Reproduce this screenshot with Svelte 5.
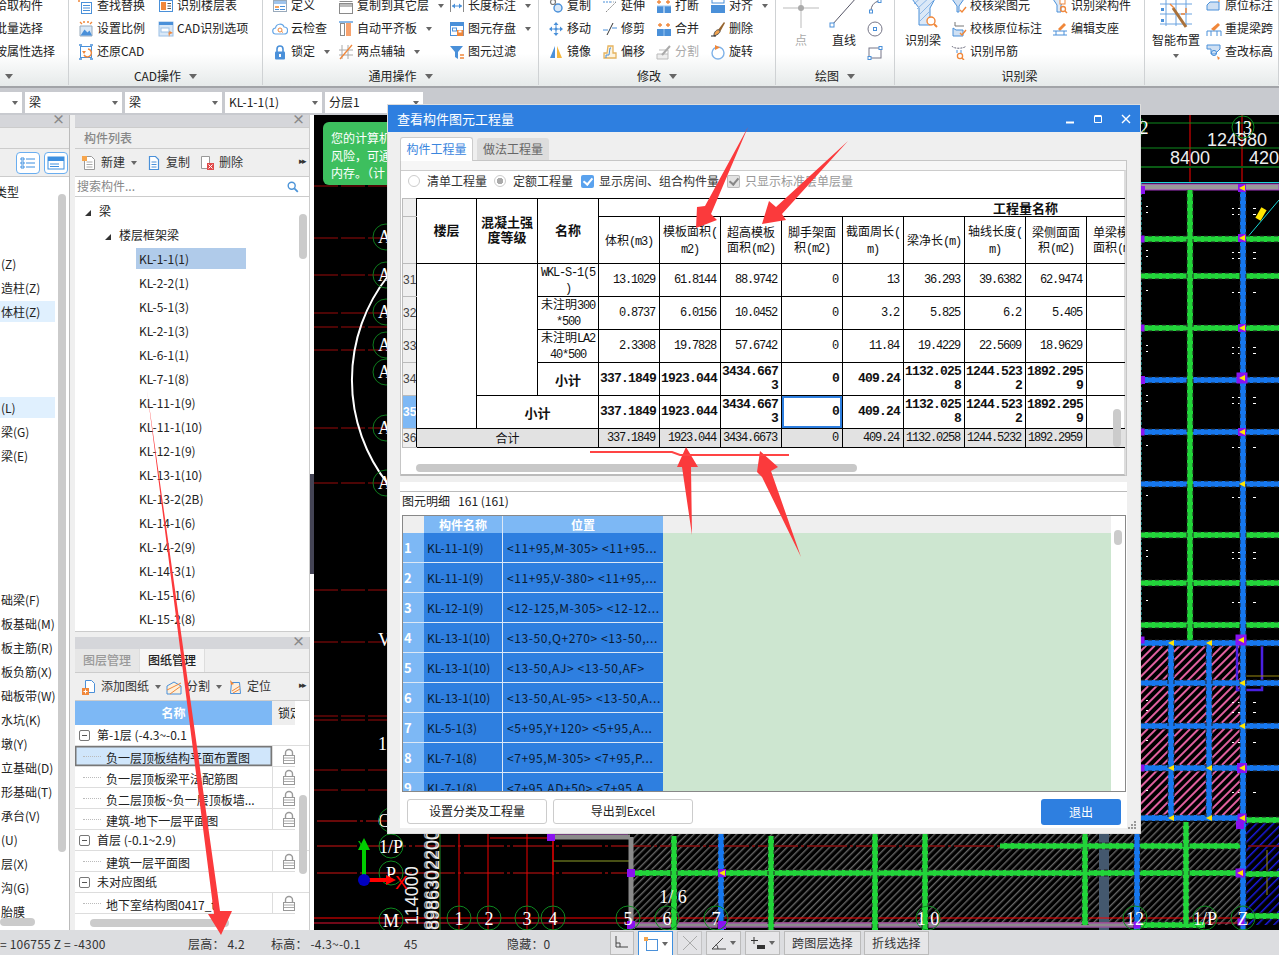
<script>
const B = '#4a90d9', O = '#f0873a', L = '#d9e8f7', G = '#8a8a8a', D = '#555';
const icons = {
  find: `<rect x="3.5" y="4.5" width="10" height="11" fill="#fff" stroke="${B}"/><path d="M5 7.5h7M5 10h7M5 12.5h7" stroke="${B}"/><path d="M1 1v3M12 1h3" stroke="${O}" stroke-width="1.5"/>`,
  floor: `<rect x="1.5" y="2.5" width="13" height="11" fill="#fff" stroke="${B}"/><rect x="3" y="4" width="5" height="8" fill="${O}"/><path d="M9.5 5.5h3.5M9.5 8h3.5M9.5 10.5h3.5" stroke="${D}"/>`,
  scale: `<path d="M2 15V5h12v10z" fill="${L}" stroke="#9ab"/><path d="M2.5 14.5l4-6 3 3 2-2 2.5 5z" fill="${B}"/><path d="M2 1l2 2M14 1l-2 2M5 1h2M9 1h2" stroke="${O}" stroke-width="1.3"/>`,
  cad: `<rect x="1" y="1" width="14" height="14" fill="${L}" stroke="#9cc0e6"/><rect x="1" y="1" width="14" height="3" fill="${B}"/><path d="M10 9l5 3-3 1-1 3z" fill="${O}"/><rect x="3" y="7" width="8" height="4" fill="#fff" stroke="#9cc0e6"/>`,
  restore: `<rect x="2.5" y="2.5" width="11" height="11" fill="none" stroke="${B}"/><path d="M1 1h3M12 1h3M1 15h3M12 15h3" stroke="${B}" stroke-width="1.3"/><path d="M10 5a4 4 0 1 1-4 6" fill="none" stroke="${O}" stroke-width="1.5"/><path d="M4 7h4l-2 3z" fill="${O}"/>`,
  define: `<rect x="1.5" y="2.5" width="13" height="11" fill="#fff" stroke="#9ab"/><rect x="2" y="3" width="12" height="3" fill="#9fc4ec"/><rect x="3" y="8" width="4" height="2" fill="#f4a460"/><path d="M8 8.5h5M8 11.5h5M3 11.5h4" stroke="${B}"/>`,
  cloud: `<path d="M4 13a3 3 0 0 1-.5-6 4.5 4.5 0 0 1 8.6-1A3.5 3.5 0 0 1 12 13z" fill="#fff" stroke="#66a6e6" stroke-width="1.2"/><circle cx="8" cy="9" r="2" fill="none" stroke="${O}"/><path d="M9.5 10.5l1.5 1" stroke="${O}"/>`,
  lock: `<path d="M5 8V5a3 3 0 0 1 6 0v3" fill="none" stroke="${B}" stroke-width="1.6"/><rect x="3" y="7.5" width="10" height="8" rx="1" fill="${B}"/><rect x="7" y="10" width="2" height="3" fill="#fff"/>`,
  layers: `<rect x="1.5" y="5.5" width="13" height="10" fill="#fff" stroke="${G}"/><rect x="2" y="6" width="12" height="3" fill="#bbb"/><path d="M3 1.5h10M1.5 3.5h13" stroke="${G}"/>`,
  slab: `<rect x="2.5" y="2.5" width="4" height="12" fill="#fff" stroke="${G}"/><rect x="8" y="2" width="5" height="13" fill="#f7a26e"/><path d="M1 1h14" stroke="${B}" stroke-width="1.3"/>`,
  aux: `<path d="M4 1v14M10 1v14M1 6h14M1 11h14" stroke="#aaa"/><path d="M2 15L14 1" stroke="${O}" stroke-width="1.3"/>`,
  dim: `<path d="M1.5 2v12M14.5 2v12" stroke="${G}"/><path d="M3 8h10" stroke="${B}"/><path d="M3 8l3-2.5v5zM13 8l-3-2.5v5z" fill="${B}"/>`,
  save: `<rect x="1.5" y="1.5" width="13" height="13" fill="#fff" stroke="${B}"/><rect x="2" y="2" width="12" height="3" fill="${B}"/><rect x="3.5" y="7" width="4" height="3" fill="none" stroke="${B}"/><rect x="8" y="9" width="6.5" height="6" fill="${O}"/><rect x="9.5" y="9.5" width="3" height="2" fill="#fff"/>`,
  filter: `<path d="M1 2h13L9 8v7l-3-2V8z" fill="${B}"/><path d="M11 11h4M11 14h4" stroke="${O}" stroke-width="1.3"/>`,
  copy: `<circle cx="5" cy="4" r="2.5" fill="#fff" stroke="#777" stroke-width="1.2"/><circle cx="10" cy="10" r="4" fill="${L}" stroke="${B}" stroke-width="1.4"/><path d="M7 6l1 1" stroke="#777"/>`,
  move: `<path d="M8 1l2.5 3h-5zM8 15l-2.5-3h5zM1 8l3-2.5v5zM15 8l-3 2.5v-5z" fill="${B}"/><path d="M8 4v8M4 8h8" stroke="${B}"/><circle cx="8" cy="8" r="1.5" fill="${B}"/>`,
  mirror: `<path d="M2 14L7 2v12z" fill="${B}"/><path d="M9 2l5 12H9z" fill="#f6b73c"/>`,
  extend: `<path d="M1 4h8" stroke="${B}" stroke-dasharray="2 1"/><path d="M9 4h6" stroke="#9ab" stroke-dasharray="1 1"/><path d="M4 14l10-10" stroke="${G}" stroke-dasharray="2 1"/>`,
  trim: `<path d="M1 9h5M10 7h5" stroke="${B}" stroke-width="1.2"/><path d="M5 14l6-12" stroke="#333"/>`,
  offset: `<path d="M2 14V9h3l1-7h5v7h3v5z" fill="#fdf3de" stroke="#e5b35e" stroke-width="1.3"/><path d="M4 14v-3h3l1-7h1" fill="none" stroke="${B}"/>`,
  brk: `<rect x="1" y="8" width="6.5" height="7" fill="${B}"/><rect x="8.5" y="8" width="6.5" height="7" fill="${B}"/><path d="M1 8h14" stroke="#9cc6f0"/><path d="M3 2v4M5 4H1M12 2v4M14 4h-4" stroke="${O}" stroke-width="1.3"/>`,
  merge: `<rect x="1" y="8" width="14" height="7" fill="${B}"/><path d="M8 8v7" stroke="#9cc6f0"/><path d="M4 2v4M6 4H2M12 2v4M14 4h-4" stroke="${O}" stroke-width="1.3"/>`,
  split: `<path d="M1 10h11v5H1z" fill="#eee" stroke="#bbb"/><path d="M3 6h9v4" fill="none" stroke="#bbb"/><path d="M6 11l8-9" stroke="#aaa" stroke-width="2"/>`,
  alignr: `<rect x="2" y="1" width="12" height="4" fill="#fff" stroke="${B}"/><rect x="1" y="7" width="14" height="8" fill="${B}"/>`,
  del: `<path d="M8 9l6-8 1 1-5 9z" fill="#96642e"/><path d="M4 14c0-3 3-6 5-5s1 4-5 6z" fill="#f0a24e" stroke="#555"/><path d="M1 15h5" stroke="#222"/>`,
  rotate: `<circle cx="8" cy="9" r="6" fill="#fff" stroke="#7fb2e8" stroke-width="1.4"/><path d="M5 1l5 2.5-5 2.5z" fill="${O}"/>`,
  check1: `<path d="M1 1h12L8 8v6H6V8z" fill="#cfe0f3" stroke="${B}"/><path d="M9 12l2 2 4-5" fill="none" stroke="${O}" stroke-width="1.4"/>`,
  check2: `<path d="M2 7v8h10V9H5z" fill="#cfe0f3" stroke="${B}"/><path d="M4 1v4h9" fill="none" stroke="#777"/><path d="M9 12l2 2 4-5" fill="none" stroke="${O}" stroke-width="1.4"/>`,
  hanger: `<path d="M1 2c1 3 12 3 14 0" fill="none" stroke="#667" stroke-dasharray="2 1"/><path d="M6 6v3M10 6v3" stroke="${B}"/><circle cx="9" cy="12" r="2.6" fill="none" stroke="${O}" stroke-width="1.3"/><path d="M11 14l2 2" stroke="${O}" stroke-width="1.5"/>`,
  beam: `<path d="M1 1h12L9 7v7H5V7z" fill="#dde9f6" stroke="${B}"/><rect x="8" y="1" width="5" height="5" fill="#fff" stroke="${O}"/><circle cx="11" cy="11" r="2.5" fill="none" stroke="${O}" stroke-width="1.3"/><path d="M13 13l2 2" stroke="${O}" stroke-width="1.5"/>`,
  seat: `<path d="M6 8l6-6 2 2-6 6z" fill="${O}"/><path d="M1 10h14M1 14h14" stroke="${B}"/><path d="M4 10v4M12 10v4" stroke="${B}"/>`,
  orig: `<path d="M1 7l3-3h9v8H1z" fill="#cfe0f3" stroke="${B}"/><path d="M5 1h8v3" fill="none" stroke="${O}"/>`,
  span: `<path d="M5 8l7-6 2 2-6 6z" fill="${O}"/><path d="M1 10h14v5M1 10v5M5 10v5M11 10v5" fill="none" stroke="${B}"/>`,
  elev: `<path d="M1 1h13v4L10 9v1H5V5L1 5z" fill="#cfe0f3" stroke="${B}"/><circle cx="8" cy="9" r="2.6" fill="none" stroke="${B}"/><path d="M11 12l3 2-2 2z" fill="${O}"/>`,
  arcI: `<path d="M4 13c0-5 3-9 8-10" fill="none" stroke="#667"/><rect x="2.5" y="12" width="3" height="3" fill="#fff" stroke="${B}"/><rect x="11" y="1.5" width="3" height="3" fill="#fff" stroke="${B}"/>`,
  circI: `<circle cx="8" cy="8" r="7" fill="none" stroke="#778"/><rect x="6.5" y="6.5" width="3" height="3" fill="#fff" stroke="${B}"/>`,
  rectI: `<rect x="2" y="4" width="12" height="10" fill="none" stroke="#778"/><rect x="12" y="2.5" width="3" height="3" fill="#fff" stroke="${B}"/><rect x="1" y="12.5" width="3" height="3" fill="#fff" stroke="${B}"/>`,
  newd: `<path d="M3.5 1.5h7l3 3v10h-10z" fill="#fff" stroke="#999"/><path d="M5.5 7h6M5.5 9.5h6M5.5 12h6" stroke="#aaa"/><rect x="1" y="1" width="5" height="5" fill="#f6a54c"/>`,
  cpd: `<path d="M3.5 1.5h6l3 3v10h-9z" fill="#fff" stroke="${B}" stroke-width="1.2"/><path d="M5.5 7h5M5.5 9.5h5M5.5 12h5" stroke="${B}"/>`,
  dld: `<path d="M2.5 1.5h8v12h-8z" fill="#fff" stroke="#999"/><rect x="8" y="8" width="7" height="7" fill="#e04a4a"/><path d="M9.5 9.5l4 4M13.5 9.5l-4 4" stroke="#fff"/>`,
  add: `<path d="M4.5 1.5h6l3 3v9h-9z" fill="#fff" stroke="${B}"/><rect x="1" y="9" width="7" height="7" fill="${O}"/><path d="M4.5 10.5v4M2.5 12.5h4" stroke="#fff"/>`,
  spl: `<path d="M1 15V7l7-4 7 4v8z" fill="#fdf0dc" stroke="${B}"/><path d="M1 11l14-7M4 15l11-8" stroke="${O}"/>`,
  loc: `<path d="M4.5 3.5h8l1 11h-10z" fill="#fdeedd" stroke="${B}"/><path d="M5 12l8-5M6 14l7-4" stroke="${O}"/><path d="M3 1l4 4-3 1z" fill="${O}"/>`,
  search: `<circle cx="6.5" cy="6.5" r="4" fill="none" stroke="#4c94d8" stroke-width="1.6"/><path d="M9.5 9.5l4 4" stroke="#4c94d8" stroke-width="2"/>`,
  padlock: `<path d="M4.5 8V5a3.5 3.5 0 0 1 7 0v3" fill="none" stroke="#999" stroke-width="1.4"/><rect x="2.5" y="7.5" width="11" height="8" fill="#fff" stroke="#999"/><path d="M3 10h10M3 12.5h10" stroke="#aaa"/>`,
  ortho: `<path d="M2 1v11h12" fill="none" stroke="#444"/><path d="M2 8h4v4" fill="none" stroke="#444"/>`,
  snap: `<rect x="3.5" y="3.5" width="11" height="11" fill="#fff" stroke="${B}"/><rect x="1" y="1" width="4" height="4" fill="#f6a54c"/>`,
  cross: `<path d="M1 1l14 14M15 1L1 15" stroke="#999"/>`,
  angle: `<path d="M1 14h14M1 14L12 3" stroke="#444"/><path d="M7 14a8 8 0 0 0-2-5" fill="none" stroke="#444"/>`,
  plus: `<path d="M4 2v7M1 5.5h7" stroke="#333"/><rect x="7" y="10" width="8" height="4" fill="#333"/>`
};

const groups = [
  { w: 69, cls: 'first', label: '', pad: -5, caret: 1, cols: [{ w: 74, items: [{ t: '拾取构件' }, { t: '批量选择' }, { t: '按属性选择' }] }] },
  { w: 194, label: 'CAD操作', caret: 1, pad: 9, cols: [
    { w: 80, items: [{ i: 'find', t: '查找替换' }, { i: 'scale', t: '设置比例' }, { i: 'restore', t: '还原CAD' }] },
    { w: 100, items: [{ i: 'floor', t: '识别楼层表' }, { i: 'cad', t: 'CAD识别选项' }] }] },
  { w: 276, label: '通用操作', caret: 1, pad: 9, cols: [
    { w: 66, items: [{ i: 'define', t: '定义' }, { i: 'cloud', t: '云检查' }, { i: 'lock', t: '锁定', c: 1 }] },
    { w: 111, items: [{ i: 'layers', t: '复制到其它层', c: 1 }, { i: 'slab', t: '自动平齐板', c: 1 }, { i: 'aux', t: '两点辅轴', c: 1 }] },
    { w: 90, items: [{ i: 'dim', t: '长度标注', c: 1 }, { i: 'save', t: '图元存盘', c: 1 }, { i: 'filter', t: '图元过滤' }] }] },
  { w: 237, label: '修改', caret: 1, pad: 9, cols: [
    { w: 54, items: [{ i: 'copy', t: '复制' }, { i: 'move', t: '移动' }, { i: 'mirror', t: '镜像' }] },
    { w: 54, items: [{ i: 'extend', t: '延伸' }, { i: 'trim', t: '修剪' }, { i: 'offset', t: '偏移' }] },
    { w: 54, items: [{ i: 'brk', t: '打断' }, { i: 'merge', t: '合并' }, { i: 'split', t: '分割', off: 1 }] },
    { w: 60, items: [{ i: 'alignr', t: '对齐', c: 1 }, { i: 'del', t: '删除' }, { i: 'rotate', t: '旋转' }] }] },
  { w: 119, label: '绘图', caret: 1, pad: 0, bigs: [{ k: 'point', t: '点', w: 50, off: 1 }, { k: 'line', t: '直线', w: 36 }], gap: 5, cols: [{ w: 24, items: [{ i: 'arcI' }, { i: 'circI' }, { i: 'rectI' }] }] },
  { w: 250, label: '识别梁', pad: 8, bigs: [{ k: 'funnel', t: '识别梁', w: 40 }], gap: 8, cols: [
    { w: 101, items: [{ i: 'check1', t: '校核梁图元' }, { i: 'check2', t: '校核原位标注' }, { i: 'hanger', t: '识别吊筋' }] },
    { w: 90, items: [{ i: 'beam', t: '识别梁构件' }, { i: 'seat', t: '编辑支座' }] }] },
  { w: 134, label: '', pad: 5, bigs: [{ k: 'smart', t: '智能布置', w: 52, c: 1 }], gap: 4, cols: [
    { w: 70, items: [{ i: 'orig', t: '原位标注' }, { i: 'span', t: '重提梁跨' }, { i: 'elev', t: '查改标高' }] }] }
];

const selects = [{ w: 22, t: '' }, { w: 97, t: '梁' }, { w: 97, t: '梁' }, { w: 97, t: 'KL-1-1(1)' }, { w: 98, t: '分层1' }];

const leftList = [
  ['类型', -5], 0, 0, ['(Z)', 1], ['造柱(Z)', 1], ['体柱(Z)', 1, 1], 0, 0, 0, ['(L)', 1, 1], ['梁(G)', 1], ['梁(E)', 1],
  0, 0, 0, 0, 0, ['础梁(F)', 1], ['板基础(M)', 1], ['板主筋(R)', 1], ['板负筋(X)', 1], ['础板带(W)', 1], ['水坑(K)', 1],
  ['墩(Y)', 1], ['立基础(D)', 1], ['形基础(T)', 1], ['承台(V)', 1], ['(U)', 1], ['层(X)', 1], ['沟(G)', 1], ['胎膜', 1]
];
const beams = ['KL-1-1(1)', 'KL-2-2(1)', 'KL-5-1(3)', 'KL-2-1(3)', 'KL-6-1(1)', 'KL-7-1(8)', 'KL-11-1(9)', 'KL-11-1(10)', 'KL-12-1(9)', 'KL-13-1(10)', 'KL-13-2(2B)', 'KL-14-1(6)', 'KL-14-2(9)', 'KL-14-3(1)', 'KL-15-1(6)', 'KL-15-2(8)'];
const drawings = [
  { g: '第-1层 (-4.3~-0.1' },
  { t: '负一层顶板结构平面布置图', cur: 1 },
  { t: '负一层顶板梁平法配筋图' },
  { t: '负二层顶板~负一层顶板墙...' },
  { t: '建筑-地下一层平面图' },
  { g: '首层 (-0.1~2.9)' },
  { t: '建筑一层平面图' },
  { g: '未对应图纸' },
  { t: '地下室结构图0417_t' }
];

const metricHead = ['体积(m3)', '模板面积(\nm2)', '超高模板\n面积(m2)', '脚手架面\n积(m2)', '截面周长(\nm)', '梁净长(m)', '轴线长度(\nm)', '梁侧面面\n积(m2)', '单梁模板\n面积(m2)'];
const rowsA = [
  { n: 31, name: 'WKL-S-1(5\n)', v: ['13.1029', '61.8144', '88.9742', '0', '13', '36.293', '39.6382', '62.9474', ''] },
  { n: 32, name: '未注明300\n*500', v: ['0.8737', '6.0156', '10.0452', '0', '3.2', '5.825', '6.2', '5.405', ''] },
  { n: 33, name: '未注明LA2\n40*500', v: ['2.3308', '19.7828', '57.6742', '0', '11.84', '19.4229', '22.5609', '18.9629', ''] }
];
const subtotal = ['337.1849', '1923.044', '3434.667\n3', '0', '409.24', '1132.025\n8', '1244.523\n2', '1892.295\n9', ''];
const total = ['337.1849', '1923.044', '3434.6673', '0', '409.24', '1132.0258', '1244.5232', '1892.2959', ''];
const colW = [14, 60, 61, 61, 61, 61, 61, 61, 61, 61, 61, 61, 61];

function lines(s) { return s.split('\n').map((l) => l.split(/([\x00-\x7f]+)/).filter(Boolean)); }
const isAscii = (s) => /^[\x00-\x7f]+$/.test(s);

const detail = [
  ['KL-11-1(9)', '<11+95,M-305> <11+95...'], ['KL-11-1(9)', '<11+95,V-380> <11+95,...'], ['KL-12-1(9)', '<12-125,M-305> <12-12...'],
  ['KL-13-1(10)', '<13-50,Q+270> <13-50,...'], ['KL-13-1(10)', '<13-50,AJ> <13-50,AF>'], ['KL-13-1(10)', '<13-50,AL-95> <13-50,A...'],
  ['KL-5-1(3)', '<5+95,Y+120> <5+95,A...'], ['KL-7-1(8)', '<7+95,M-305> <7+95,P...'], ['KL-7-1(8)', '<7+95,AD+50> <7+95,A...']
];

const statusText = [['= 106755 Z = -4300', 188], ['层高： 4.2', 83], ['标高： -4.3~-0.1', 133], ['45', 103], ['隐藏：0', 103]];
const statusBtns = [{ i: 'ortho', w: 24 }, { i: 'snap', w: 35, c: 1, on: 1 }, { i: 'cross', w: 25, off: 1 }, { i: 'angle', w: 35, c: 1 }, { i: 'plus', w: 35, c: 1 }];

/* drawing data, in page coordinates */
const G1 = '#22d43a', BL = '#1677ee', PU = '#8a12f0', Y = '#ffe600';
const hBeams = [
  [239, 1141, 1279, G1], [276, 1141, 1279, G1], [328, 1141, 1279, G1], [380, 1141, 1279, BL], [432, 1141, 1279, BL], [484, 1141, 1279, BL],
  [535, 1141, 1279, G1], [583, 1141, 1279, G1], [625, 1141, 1279, G1], [643, 1141, 1279, BL], [683, 1141, 1279, BL], [726, 1141, 1279, BL], [768, 1141, 1279, BL],
  [818, 1141, 1241, BL], [820, 1241, 1279, G1], [873, 635, 1240, G1], [846, 1000, 1240, G1], [874, 1245, 1279, G1], [916, 1245, 1279, G1], [925, 1140, 1205, G1]
];
const vBeams = [
  [1190, 190, 640, G1], [1243, 190, 930, BL], [1171, 645, 818, BL], [1209, 645, 818, BL], [1186, 822, 925, G1],
  [674, 836, 930, G1], [771, 836, 930, G1], [875, 833, 930, G1], [925, 833, 930, G1], [1085, 833, 925, G1], [721, 833, 930, BL], [1137, 833, 930, BL]
];
const purple = [[1242, 188, 8], [1242, 238, 8], [1242, 328, 8], [1242, 378, 11], [1242, 432, 8], [1241, 640, 11], [1242, 768, 10], [1242, 818, 9], [1141, 190, 8], [1141, 239, 7], [1141, 328, 7], [1141, 380, 8], [1141, 432, 7], [1141, 640, 7], [1141, 768, 7], [631, 873, 8], [631, 925, 8], [722, 873, 8], [722, 925, 8], [551, 837, 8], [1137, 925, 7], [1241, 922, 7], [1240, 873, 9], [1240, 825, 8]];
const yellow = [[1242, 188], [1242, 238], [1242, 328], [1242, 378], [1242, 432], [1241, 640], [1242, 484], [1171, 643], [1209, 643], [1242, 683], [1242, 726], [1171, 768], [1209, 768], [1242, 768], [1171, 818], [1209, 818], [1242, 818], [722, 873], [1240, 873]];
const ticks = [186, 238, 275, 313, 327, 350, 428, 483, 590, 642, 716, 720, 770, 790];
const darkRed = [821, 846, 873];
const noise = [];
for (const y of [206, 212, 250, 256, 290, 345, 351, 395, 401, 445, 495, 550, 556, 600, 700, 710, 740, 790]) {
  for (const x of [1146, 1232, 1238, 1253]) noise.push([x, y + (x % 3), 2 + (x % 2)]);
}
const circles = [[391, 846, '1/P'], [391, 873, 'P'], [391, 920, 'M'], [459, 918, '1'], [489, 918, '2'], [527, 918, '3'], [553, 918, '4'], [628, 918, '5'], [667, 918, '6'], [716, 918, '7'], [928, 918, '1 0'], [1135, 918, '12'], [1205, 918, '1/P'], [1243, 918, 'Z']];
const axisLabels = [[378, 243], [378, 281], [378, 318], [378, 351], [378, 378], [378, 434], [378, 489]];
</script>

{#snippet icon(name, size = 16)}
  <svg class="i" width={size} height={size} viewBox="0 0 16 16">{@html icons[name]}</svg>
{/snippet}

{#snippet mixed(text)}
  {#each lines(text) as line, li}
    {#if li > 0}<br />{/if}
    {#each line as seg}
      {#if isAscii(seg)}<span class="asc">{seg}</span>{:else}{seg}{/if}
    {/each}
  {/each}
{/snippet}

{#snippet bigIcon(kind)}
  <svg class="bigi" width="36" height="36" viewBox="0 0 36 36">
    {#if kind === 'point'}
      <path d="M18 0v34M0 14h36" stroke="#bbb" /><circle cx="18" cy="14" r="3" fill="#aaa" />
    {:else if kind === 'line'}
      <path d="M6 31L31 3" stroke="#556" /><rect x="4" y="29" width="4" height="4" fill="#fff" stroke="#4a90d9" /><rect x="29" y="1" width="4" height="4" fill="#fff" stroke="#4a90d9" />
    {:else if kind === 'funnel'}
      <path d="M4 1h28l-7 13v17H14V14z" fill="#dbe8f7" stroke="#4a90d9" />
      <path d="M7 5l5-4M9 10l10-9M12 15l15-14M15 20l13-13M15 27l10-10" stroke="#8cb6e6" />
      <circle cx="26" cy="27" r="4" fill="#fff" stroke="#f0873a" stroke-width="1.4" /><path d="M29 30l3 3" stroke="#f0873a" stroke-width="2" />
    {:else}
      <path d="M8 2v30M18 2v30M28 2v30M2 10h32M2 20h32M2 30h32" stroke="#6aa3e0" />
      <path d="M15 14l13 19" stroke="#a9713a" stroke-width="3" />
      <path d="M12 10l4 4M23 20l4 0M28 14v5" stroke="#f0873a" stroke-width="1.4" />
      <rect x="3" y="14" width="3" height="3" fill="#4a90d9" /><rect x="3" y="25" width="3" height="3" fill="#4a90d9" />
    {/if}
  </svg>
{/snippet}

<div class="page">
  <header class="ribbon">
    {#each groups as g}
      <section class="group {g.cls ?? ''}" style:width="{g.w}px">
        <div class="gbody" style:margin-left="{g.pad}px">
          {#if g.bigs}
            {#each g.bigs as b}
              <div class="big" class:off={b.off} style:width="{b.w}px">
                {@render bigIcon(b.k)}
                <span>{b.t}</span>
                {#if b.c}<b class="caret bc"></b>{/if}
              </div>
            {/each}
            <div style:width="{g.gap}px"></div>
          {/if}
          {#each g.cols as col}
            <div class="col" style:width="{col.w}px">
              {#each col.items as it}
                <div class="item" class:off={it.off}>
                  {#if it.i}{@render icon(it.i)}{/if}
                  {#if it.t}<span>{it.t}</span>{/if}
                  {#if it.c}<b class="caret"></b>{/if}
                </div>
              {/each}
            </div>
          {/each}
        </div>
        <div class="glabel">
          <span>{g.label}</span>
          {#if g.caret}<b class="caret dark"></b>{/if}
        </div>
      </section>
    {/each}
  </header>

  <div class="bar">
    {#each selects as s}
      <div class="sel" style:width="{s.w}px"><span>{s.t}</span><b class="caret"></b></div>
    {/each}
  </div>

  <div class="main">
    <aside class="pleft">
      <div class="strip"><span class="x">×</span></div>
      <div class="grayrow"></div>
      <div class="toolrow right">
        <span class="tbtn"><svg width="16" height="14" viewBox="0 0 16 14"><path d="M1 2h3v2H1zM1 6h3v2H1zM1 10h3v2H1z" fill="none" stroke="#3d8fe0" /><path d="M6 3h9M6 7h9M6 11h9" stroke="#3d8fe0" /></svg></span>
        <span class="tbtn"><svg width="18" height="14" viewBox="0 0 18 14"><rect x="1" y="1" width="16" height="12" fill="#fff" stroke="#3d8fe0" /><rect x="1" y="1" width="16" height="4" fill="#3d8fe0" /><path d="M3 8h9M3 10.5h9" stroke="#3d8fe0" /></svg></span>
      </div>
      <div class="llist">
        {#each leftList as l}
          <div class="lrow" class:hl={l && l[2]}>
            {#if l}<span style:margin-left="{l[1]}px">{l[0]}</span>{/if}
          </div>
        {/each}
        <div class="vthumb ltb"></div>
        <div class="hthumb lth"></div>
      </div>
    </aside>

    <aside class="pmid">
      <section class="pup">
        <div class="strip"><span class="x">×</span></div>
        <div class="grayrow title">构件列表</div>
        <div class="toolrow">
          <span class="tool">{@render icon('newd')}新建<b class="caret"></b></span>
          <span class="tool">{@render icon('cpd')}复制</span>
          <span class="tool">{@render icon('dld')}删除</span>
          <span class="more">▸▸</span>
        </div>
        <div class="search"><span>搜索构件...</span>{@render icon('search', 14)}</div>
        <div class="tree">
          <div class="node n0"><i class="tri"></i>梁</div>
          <div class="node n1"><i class="tri"></i>楼层框架梁</div>
          {#each beams as b, i}
            <div class="node n2"><span class:on={i === 0}>{b}</span></div>
          {/each}
          <div class="vthumb ttb"></div>
        </div>
      </section>

      <section class="plow">
        <div class="strip"><span class="x">×</span></div>
        <div class="ltabs"><span>图层管理</span><span class="on">图纸管理</span></div>
        <div class="toolrow low">
          <span class="tool">{@render icon('add')}添加图纸<b class="caret"></b></span>
          <span class="tool">{@render icon('spl')}分割<b class="caret"></b></span>
          <span class="tool">{@render icon('loc')}定位</span>
          <span class="more">▸▸</span>
        </div>
        <div class="dlist">
          <div class="dhead"><span class="dh1">名称</span><span class="dh2">锁定</span></div>
          {#each drawings as d}
            {#if d.g}
              <div class="drow grp"><i class="minus"></i>{d.g}</div>
            {:else}
              <div class="drow" class:cursel={d.cur}>
                <span class="dname"><i class="conn"></i>{d.t}</span>
                <span class="dlock">{@render icon('padlock')}</span>
              </div>
            {/if}
          {/each}
          <div class="vthumb dtb"></div>
          <div class="hthumb dth"></div>
        </div>
      </section>
    </aside>

    <div class="handle"><i></i></div>

    <div class="canvas">
      <svg class="cad" width="965" height="815" viewBox="314 115 965 815">
        <defs>
          <pattern id="hg" width="5" height="5" patternUnits="userSpaceOnUse" patternTransform="rotate(45)"><rect width="5" height="5" fill="#000" /><rect width="1.4" height="5" fill="#666" /></pattern>
          <pattern id="hp" width="6" height="6" patternUnits="userSpaceOnUse" patternTransform="rotate(45)"><rect width="6" height="6" fill="#000" /><rect width="2" height="6" fill="#e0609f" /></pattern>
          <pattern id="hb" width="6" height="6" patternUnits="userSpaceOnUse" patternTransform="rotate(45)"><rect width="6" height="6" fill="#000" /><rect width="1.5" height="6" fill="#1a1ae0" /></pattern>
        </defs>
        <rect x="314" y="115" width="965" height="815" fill="#000" />

        <rect x="632" y="833" width="508" height="92" fill="url(#hg)" />
        <rect x="1140" y="822" width="100" height="103" fill="url(#hg)" />
        <rect x="1141" y="645" width="100" height="173" fill="url(#hp)" />
        <rect x="1245" y="823" width="34" height="102" fill="url(#hb)" />
        <rect x="1099" y="833" width="10" height="97" fill="#44586e" />

        {#each ticks as y}<line x1="314" x2="388" y1={y} y2={y} stroke="#9a0a0a" stroke-dasharray="24 3" />{/each}
        {#each darkRed as y}<line x1="317" x2={y === 821 ? 388 : 1279} y1={y} y2={y} stroke="#8a0c0c" stroke-width="1.5" stroke-dasharray="40 3 3 3" />{/each}
        <line x1="314" x2="1240" y1="918" y2="918" stroke="#f00" /><line x1="314" x2="1240" y1="923" y2="923" stroke="#e01030" />
        {#each [459, 488, 527, 553] as x}<line x1={x} x2={x} y1="833" y2="930" stroke="#e00" />{/each}
        <line x1="440" x2="440" y1="833" y2="930" stroke="#1a8a2a" />
        <path d="M490 838H630M553 875V840M553 861H631" fill="none" stroke="#e00" />
        <line x1="553" x2="631" y1="861" y2="861" stroke="#1aa02a" />
        <line x1="1190" x2="1190" y1="115" y2="182" stroke="#f00" /><line x1="1242" x2="1242" y1="115" y2="182" stroke="#f00" />
        <path d="M1140 123H1279M1140 148H1279" stroke="#0f8a1f" />
        <path d="M1140 167H1279" stroke="#0a5a14" stroke-width="2" />
        <line x1="1140" x2="1279" y1="182.5" y2="182.5" stroke="#19d8d8" />
        <rect x="1141" y="184" width="138" height="6" fill="#9a9a9a" stroke="#a030c0" />
        <line x1="1141" x2="1141" y1="182" y2="640" stroke="#19d8d8" stroke-dasharray="3 2" />
        <line x1="1246" x2="1279" y1="239" y2="200" stroke="#19d8d8" />
        <rect x="1258" y="208" width="6" height="12" fill={Y} transform="rotate(30 1261 214)" />
        <path d="M554 837H630M631 837V925M635 925H1140" fill="none" stroke="#8a8a8a" stroke-width="5" />
        <path d="M552 834H628M635 923H1140M635 927H1140" fill="none" stroke="#a040b0" />
        <path d="M1237 645V690H1262V645" fill="none" stroke="#4a20e0" stroke-width="2.5" />
        <path d="M1245 676H1279M1140 845H1240M1267 850V895" stroke="#9a8a10" />

        {#each noise as n}<rect x={n[0]} y={n[1]} width={n[2]} height="1" fill="#fff" />{/each}

        {#each hBeams as b}
          <g>
            <line x1={b[1]} x2={b[2]} y1={b[0]} y2={b[0]} stroke={b[3]} stroke-width="6" />
            <line x1={b[1]} x2={b[2]} y1={b[0] - 3} y2={b[0] - 3} stroke="#222" stroke-dasharray="4 3" />
            <line x1={b[1]} x2={b[2]} y1={b[0] + 3} y2={b[0] + 3} stroke="#222" stroke-dasharray="4 3" />
          </g>
        {/each}
        {#each vBeams as b}
          <g>
            <line x1={b[0]} x2={b[0]} y1={b[1]} y2={b[2]} stroke={b[3]} stroke-width="6" />
            <line x1={b[0] - 3} x2={b[0] - 3} y1={b[1]} y2={b[2]} stroke="#222" stroke-dasharray="4 3" />
            <line x1={b[0] + 3} x2={b[0] + 3} y1={b[1]} y2={b[2]} stroke="#222" stroke-dasharray="4 3" />
          </g>
        {/each}
        {#each purple as p}<rect x={p[0] - p[2] / 2} y={p[1] - p[2] / 2} width={p[2]} height={p[2]} fill={PU} />{/each}
        {#each yellow as p}<path d="M{p[0] - 3} {p[1]}L{p[0] + 3} {p[1] - 3}V{p[1] + 3}z" fill={Y} />{/each}

        <path d="M388 276A168 168 0 0 0 388 484" fill="none" stroke="#fff" stroke-width="2" />
        {#each axisLabels as a}
          <circle cx={a[0] + 8} cy={a[1] - 6} r="13" fill="none" stroke="#0d7a1c" />
          <text class="lbl" x={a[0]} y={a[1]}>A</text>
        {/each}
        <text class="lbl" x="378" y="646">V</text>
        <text class="lbl" x="378" y="750">1</text>
        <text class="lbl" x="378" y="827">C</text>
        <circle cx="391" cy="820" r="12" fill="none" stroke="#0d7a1c" />

        {#each circles as c}
          <circle cx={c[0]} cy={c[1]} r="12" fill="none" stroke="#0d8a1f" />
          <text class="lbl mid" x={c[0]} y={c[1] + 7}>{c[2]}</text>
        {/each}
        <text class="lbl mid" x="673" y="903">1/ 6</text>

        <text class="dim" x="1207" y="146">124980</text>
        <text class="dim" x="1170" y="164">8400</text>
        <text class="dim" x="1249" y="164">420</text>
        <circle cx="1243" cy="127" r="11" fill="none" stroke="#0d8a1f" />
        <text class="lbl mid" x="1243" y="134">13</text>
        <circle cx="1134" cy="127" r="11" fill="none" stroke="#0d8a1f" />
        <text class="lbl mid" x="1144" y="134">2</text>

        <text class="dim" transform="translate(418 925) rotate(-90)">114000</text>
        <text class="dim" transform="translate(439 930) rotate(-90)">89863022000</text>
        <text class="dim" transform="translate(437 930) rotate(-90)" opacity=".7">89863022000</text>

        <path d="M364 880V848" stroke="#0c0" stroke-width="4" /><path d="M358 850L364 838L370 850z" fill="#0c0" />
        <text class="ax g" x="358" y="850" font-size="14">Y</text>
        <path d="M364 880H388" stroke="#f00" stroke-width="4" /><path d="M386 875L396 880L386 885z" fill="#f00" />
        <text class="ax r" x="395" y="889">X</text>
        <circle cx="364" cy="880" r="6" fill="#0000c0" />
      </svg>
      <div class="notice">您的计算机<br />风险，可通<br />内存。（计</div>
    </div>
  </div>

  <footer class="status">
    {#each statusText as s}<span class="st" style:width="{s[1]}px">{s[0]}</span>{/each}
    {#each statusBtns as b}
      <span class="sb" class:on={b.on} class:off={b.off} style:width="{b.w}px">
        {@render icon(b.i)}{#if b.c}<b class="caret"></b>{/if}
      </span>
    {/each}
    <span class="sb txt">跨图层选择</span>
    <span class="sb txt">折线选择</span>
  </footer>

  <div class="dialog">
    <div class="dtitle">
      <span>查看构件图元工程量</span>
      <div class="winbtns">
        <svg width="10" height="10" viewBox="0 0 10 10"><path d="M1 8.5h8" stroke="#fff" stroke-width="2" /></svg>
        <svg width="10" height="10" viewBox="0 0 10 10"><path d="M1.5 2.5h7v6h-7z" fill="none" stroke="#fff" /><path d="M1.5 2h7" stroke="#fff" stroke-width="2" /></svg>
        <svg width="10" height="10" viewBox="0 0 10 10"><path d="M1 1l8 8M9 1L1 9" stroke="#fff" stroke-width="1.4" /></svg>
      </div>
    </div>
    <div class="dtabs"><span class="on">构件工程量</span><span>做法工程量</span></div>
    <div class="upper">
      <div class="upanel">
        <div class="opts">
          <span class="opt o1"><i class="radio"></i>清单工程量</span>
          <span class="opt o2"><i class="radio dot"></i>定额工程量</span>
          <span class="opt o3"><i class="cb"></i>显示房间、组合构件量</span>
          <span class="opt o4 dis"><i class="cb gray"></i>只显示标准层单层量</span>
        </div>
        <div class="tblwrap">
          <table>
            <colgroup>{#each colW as w}<col style:width="{w}px" />{/each}</colgroup>
            <tbody>
              <tr class="hr1">
                <td class="g"></td>
                <th rowspan="2" class="ht">楼层</th>
                <th rowspan="2" class="ht">混凝土强<br />度等级</th>
                <th rowspan="2" class="ht">名称</th>
                <th colspan="9" class="ttl">工程量名称</th>
              </tr>
              <tr class="hr2">
                <td class="g"></td>
                {#each metricHead as h}<td class="mh">{@render mixed(h)}</td>{/each}
              </tr>
              {#each rowsA as r, i}
                <tr class="dr">
                  <td class="g">{r.n}</td>
                  {#if i === 0}<td rowspan="5"></td><td rowspan="4"></td>{/if}
                  <td class="nm">{@render mixed(r.name)}</td>
                  {#each r.v as v}<td class="num">{v}</td>{/each}
                </tr>
              {/each}
              <tr class="dr">
                <td class="g">34</td>
                <th class="ht">小计</th>
                {#each subtotal as v}<td class="num bold">{#each v.split('\n') as t, k}{#if k}<br />{/if}{t}{/each}</td>{/each}
              </tr>
              <tr class="dr">
                <td class="g act">35</td>
                <th colspan="2" class="ht">小计</th>
                {#each subtotal as v, k}<td class="num bold" class:cur={k === 3}>{#each v.split('\n') as t, j}{#if j}<br />{/if}{t}{/each}</td>{/each}
              </tr>
              <tr class="tr">
                <td class="g">36</td>
                <td colspan="3" class="sum">合计</td>
                {#each total as v}<td class="num">{v}</td>{/each}
              </tr>
            </tbody>
          </table>
          <div class="vthumb tv"></div>
        </div>
        <div class="hthumb th"></div>
      </div>
    </div>
    <div class="lower">
      <div class="lpanel">
        <div class="ltitle">图元明细&nbsp;&nbsp;&nbsp;161 (161)</div>
        <div class="detail">
          <div class="dtable">
            <div class="dt-h"><span class="c0"></span><span class="c1">构件名称</span><span class="c2">位置</span></div>
            {#each detail as d, i}
              <div class="dt-r"><span class="c0">{i + 1}</span><span class="c1">{d[0]}</span><span class="c2">{d[1]}</span></div>
            {/each}
          </div>
          <div class="dfill"><div class="fillhead"></div><div class="fillbody"></div></div>
          <div class="dscroll"><i></i></div>
        </div>
        <div class="btns">
          <button>设置分类及工程量</button>
          <button>导出到Excel</button>
          <button class="exit">退出</button>
        </div>
      </div>
    </div>
    <svg class="grip" width="8" height="8" viewBox="0 0 8 8"><path d="M6 0h2v2H6zM3 3h2v2H3zM6 3h2v2H6zM0 6h2v2H0zM3 6h2v2H3zM6 6h2v2H6z" fill="#999" /></svg>
  </div>

  <svg class="marks" width="1279" height="955" viewBox="0 0 1279 955">
    <g fill="#fb3a3c">
      <path d="M748 127L711 214 717 220 696 228 697 207 705 206z" />
      <path d="M848 141L782 214 786 220 762 224 769 201 776 207z" />
      <path d="M686 447L698 467 691 467 692 535 682 467 677 467z" />
      <path d="M760 451L778 467 771 471 801 557 762 477 757 472z" />
      <path d="M147 390L214 914 208 914 221 935 232 911 220 911z" />
    </g>
    <path d="M590 452H672L680 455H789" fill="none" stroke="#f44" stroke-width="2" />
  </svg>
</div>

<style>
  :global(body) { margin: 0; background: #efefef; }
  .page {
    position: relative; width: 1279px; height: 955px; overflow: hidden;
    font: 12px/1.2 "Noto Sans CJK SC", "Noto Sans", sans-serif; color: #222; background: #efefef;
  }
  .i { flex: none; display: block; }
  .caret { display: inline-block; flex: none; width: 0; height: 0; border: 3px solid transparent; border-top: 4px solid #666; border-bottom: 0; margin-left: 6px; }
  .caret.dark { border-left-width: 4px; border-right-width: 4px; border-top-width: 5px; margin-left: 8px; }

  /* ribbon */
  .ribbon { display: flex; height: 86px; border-bottom: 2px solid #a2a4a8; background: linear-gradient(#fff 62%, #e6eaea); overflow: hidden; }
  .group { flex: none; height: 85px; box-sizing: border-box; border-right: 1px solid #cfd2d4; position: relative; }
  .gbody { display: flex; height: 66px; overflow: hidden; }
  .col { flex: none; margin-top: -6px; }
  .item { display: flex; align-items: center; gap: 3px; height: 23px; white-space: nowrap; }
  .item.off, .big.off { color: #aaa; }
  .big { flex: none; display: flex; flex-direction: column; align-items: center; margin-top: -6px; }
  .big span { line-height: 20px; height: 20px; white-space: nowrap; }
  .bigi { display: block; flex: none; }
  .bc { margin: 4px 0 0; }
  .glabel { display: flex; justify-content: center; align-items: center; height: 20px; white-space: nowrap; }
  .first .glabel { padding-right: 58px; }

  .bar { display: flex; gap: 3px; height: 27px; padding-top: 4px; box-sizing: border-box; background: #c8cacf; }
  .sel { display: flex; align-items: center; justify-content: space-between; height: 21px; padding: 0 4px; box-sizing: border-box; background: #fff; }

  /* panels */
  .main { display: flex; height: 815px; }
  .strip { height: 12px; background: #d5d6da; position: relative; }
  .x { position: absolute; right: 4px; top: -3px; color: #888; font-size: 13px; line-height: 14px; font-weight: 700; }
  .grayrow { height: 22px; background: #efefef; border-top: 1px solid #ccc; border-bottom: 1px solid #ccc; box-sizing: border-box; }
  .grayrow.title { color: #888; padding: 3px 0 0 9px; font-weight: 500; }
  .toolrow { display: flex; align-items: center; gap: 9px; height: 28px; padding: 0 6px; background: #efefef; border-bottom: 1px solid #ccc; box-sizing: border-box; position: relative; }
  .toolrow.right { justify-content: flex-end; gap: 4px; padding: 0 1px 0 0; }
  .tbtn { display: flex; align-items: center; justify-content: center; width: 24px; height: 22px; box-sizing: border-box; background: #fff; border: 1px solid #6aaef0; border-radius: 4px; }
  .tool { display: flex; align-items: center; gap: 4px; white-space: nowrap; color: #333; }
  .tool .caret { margin-left: 2px; }
  .more { position: absolute; right: 4px; top: 7px; font-size: 9px; letter-spacing: -2px; color: #333; }

  .pleft { flex: none; width: 69px; background: #fff; border-right: 1px solid #bbb; position: relative; overflow: hidden; }
  .llist { padding-top: 3px; height: 753px; position: relative; }
  .lrow { height: 24px; width: 55px; white-space: nowrap; line-height: 24px; }
  .lrow.hl { background: #e0f0fe; height: 21px; line-height: 21px; margin: 1px 0 2px; }
  .vthumb { position: absolute; width: 8px; background: #cbcbcb; border-radius: 4px; }
  .hthumb { position: absolute; height: 8px; background: #cbcbcb; border-radius: 4px; }
  .ltb { left: 58px; top: 17px; height: 658px; }
  .lth { left: 0; top: 741px; width: 35px; }

  .pmid { flex: none; width: 235px; margin-left: 5px; display: flex; flex-direction: column; background: #efefef; }
  .pmid section { width: 235px; background: #fff; position: relative; }
  .pup { height: 517px; border-right: 1px solid #ccc; border-bottom: 1px solid #ccc; box-sizing: border-box; }
  .plow { height: 293px; margin-top: 5px; border-right: 1px solid #ccc; box-sizing: border-box; }
  .search { display: flex; align-items: center; justify-content: space-between; height: 20px; padding: 0 9px 0 2px; color: #888; border-bottom: 1px solid #ccc; box-sizing: border-box; }
  .tree { position: relative; height: 435px; overflow: hidden; padding-top: 2px; }
  .node { height: 24px; line-height: 24px; white-space: nowrap; }
  .n0 { padding-left: 10px; }
  .n1 { padding-left: 30px; }
  .n2 { padding-left: 61px; }
  .n2 span { display: inline-block; width: 107px; padding-left: 3px; height: 21px; line-height: 21px; }
  .n2 span.on { background: #b0cbea; }
  .tri { display: inline-block; width: 0; height: 0; border-left: 6px solid transparent; border-bottom: 6px solid #333; margin-right: 8px; vertical-align: 0; }
  .ttb { left: 224px; top: 17px; height: 45px; }

  .ltabs { display: flex; height: 24px; background: #efefef; border-bottom: 1px solid #ccc; box-sizing: border-box; }
  .ltabs span { width: 64px; text-align: center; line-height: 22px; color: #999; font-weight: 500; border-right: 1px solid #ddd; background: #e6e6e6; }
  .ltabs span.on { color: #222; background: #f6f6f6; }
  .toolrow.low { gap: 5px; height: 28px; }
  .dlist { position: relative; height: 229px; overflow: hidden; }
  .dhead { display: flex; height: 24px; line-height: 24px; width: 220px; }
  .dh1 { width: 197px; background: #7db8f5; color: #fff; text-align: center; font-weight: 700; }
  .dh2 { width: 23px; background: #eee; overflow: hidden; white-space: nowrap; padding-left: 6px; box-sizing: border-box; }
  .drow { display: flex; height: 21px; line-height: 20px; width: 220px; border-bottom: 1px solid #ddd; box-sizing: border-box; overflow: hidden; white-space: nowrap; }
  .drow.grp { padding-left: 4px; width: 235px; align-items: center; border-bottom-color: #ddd; }
  .dname { width: 197px; box-sizing: border-box; overflow: hidden; }
  .dlock { width: 23px; border-left: 1px solid #ddd; box-sizing: border-box; padding: 2px 0 0 8px; overflow: hidden; }
  .drow.cursel .dname { background: #d0e6fb; box-shadow: inset 0 0 0 1.5px #777; }
  .minus { display: block; flex: none; width: 11px; height: 11px; margin: 0 7px 0 0; box-sizing: border-box; border: 1px solid #777; border-radius: 2px; background: linear-gradient(#555, #555) center / 5px 1px no-repeat; }
  .conn { display: inline-block; width: 18px; height: 10px; margin: 0 5px 0 0; border-bottom: 1px dotted #bbb; vertical-align: 6px; }
  .drow .dname { padding-left: 8px; }
  .dtb { left: 224px; top: 94px; height: 79px; }
  .dth { left: 15px; top: 218px; width: 139px; }

  .handle { flex: none; width: 4px; background: #fff; position: relative; }
  .handle i { position: absolute; top: 359px; left: 0; width: 4px; height: 100px; background: #445; }
  .canvas { flex: none; width: 965px; position: relative; background: #000; overflow: hidden; }
  .cad { display: block; }
  .lbl { fill: #fff; font: 18px "Liberation Serif", serif; }
  .mid { text-anchor: middle; }
  .dim { fill: #eee; font: 18px "Liberation Sans", sans-serif; }
  .ax { font: 17px "Liberation Sans", sans-serif; }
  .ax.g { fill: #0c0; }
  .ax.r { fill: #f00; font-size: 19px; }
  .notice { position: absolute; left: 9px; top: 7px; width: 90px; height: 63px; box-sizing: border-box; padding: 7px 0 0 8px; background: #3dbf5e; color: #fff; border-radius: 6px; line-height: 17.5px; white-space: nowrap; }

  .status { display: flex; align-items: center; height: 25px; padding-top: 1px; box-sizing: border-box; background: #dcdde0; white-space: nowrap; letter-spacing: .2px; color: #333; }
  .st { flex: none; padding-top: 2px; }
  .sb { flex: none; display: flex; align-items: center; justify-content: center; height: 24px; box-sizing: border-box; margin-right: 4px; background: #e6e6e8; border: 1px solid #bbb; }
  .sb.on { background: #fff; border-color: #3d8fe0; border-bottom: 0; }
  .sb.off { opacity: .75; }
  .sb.txt { padding: 0 7px; margin-right: 3px; }
  .sb .caret { margin-left: 3px; }

  /* dialog */
  .dialog { position: absolute; left: 388px; top: 105px; width: 752px; height: 728px; background: #efefef; box-shadow: 0 0 0 1px #ddd; }
  .dtitle { display: flex; align-items: center; justify-content: space-between; height: 27px; padding-left: 9px; background: #2e7fe0; color: #fff; font-size: 13px; }
  .winbtns { display: flex; gap: 18px; padding-right: 9px; }
  .dtabs { display: flex; gap: 4px; height: 23px; padding: 5px 0 0 12px; }
  .dtabs span { width: 72px; text-align: center; line-height: 22px; box-sizing: border-box; color: #666; background: #ddd; border-radius: 3px 3px 0 0; margin-top: 1px; height: 22px; }
  .dtabs span.on { width: 73px; background: #fff; color: #3a86de; border: 1px solid #ccc; border-bottom: 0; margin-top: 0; height: 24px; position: relative; z-index: 1; }
  .upper { margin: 0 12px; width: 727px; box-sizing: border-box; border: 1px solid #c6c6c6; border-bottom: 0; height: 316px; padding-top: 9px; background: #f6f6f6; position: relative; }
  .upanel { position: relative; height: 306px; background: #fff; border-top: 1px solid #ccc; border-bottom: 2px solid #bbb; border-right: 2px solid #ddd; box-sizing: border-box; }
  .opts { position: relative; height: 27px; color: #333; }
  .opt { position: absolute; top: 1px; display: flex; align-items: center; gap: 5px; white-space: nowrap; height: 18px; }
  .o1 { left: 7px; gap: 7px; }
  .o2 { left: 93px; gap: 7px; }
  .o3 { left: 180px; }
  .o4 { left: 326px; }
  .dis { color: #999; }
  .radio { width: 12px; height: 12px; box-sizing: border-box; border-radius: 50%; border: 1px solid #ccc; background: #fff; display: block; }
  .radio.dot { background: radial-gradient(circle, #aaa 0 3px, #fff 3.5px); }
  .cb { width: 13px; height: 13px; border-radius: 2px; background: #5aa2ee; position: relative; display: block; }
  .cb::after { content: ""; position: absolute; left: 4px; top: 1.5px; width: 4px; height: 7px; border: solid #fff; border-width: 0 2px 2px 0; transform: rotate(40deg); }
  .cb.gray { background: #e2e2e2; box-shadow: inset 0 0 0 1px #bbb; }
  .cb.gray::after { border-color: #888; }

  .tblwrap { position: relative; width: 724px; height: 250px; overflow: hidden; }
  table { border-collapse: collapse; table-layout: fixed; width: 745px; margin-left: 1px; color: #111; }
  td, th { border: 1px solid #000; padding: 0; overflow: hidden; line-height: 14px; font-size: 12px; white-space: nowrap; }
  th { font-weight: 700; font-size: 13px; text-align: center; }
  .hr1 { height: 18px; }
  .hr2 { height: 47px; }
  .dr { height: 33px; }
  .tr { height: 19px; }
  .ht { line-height: 15px; padding-bottom: 4px; }
  .dr .ht { padding: 0; }
  .ttl { text-align: left; padding-left: 394px; border-right: 0; }
  .g { background: #efefef; border: 1px solid #bbb; border-right-color: #000; font: 12px "Liberation Sans", sans-serif; color: #444; text-align: left; letter-spacing: .2px; }
  .g.act { background: #7db8f5; color: #fff; font-weight: 700; }
  .mh { text-align: center; line-height: 15px; }
  .nm { text-align: center; line-height: 14px; }
  .asc { font: 12px/14px "Liberation Mono", monospace; letter-spacing: -1.2px; }
  .num { text-align: right; padding-right: 4px; font: 12px/14px "Liberation Mono", monospace; letter-spacing: -1.2px; }
  .num.bold { font-weight: 700; font-size: 13px; letter-spacing: -.8px; padding-right: 3px; }
  .cur { box-shadow: inset 0 0 0 2px #2e7fe0; }
  .tr td:not(.g) { background: #e2e2e2; }
  .sum { text-align: center; }
  .tv { left: 712px; top: 211px; height: 38px; }
  .th { left: 15px; top: 293px; width: 441px; height: 8px; background: #c8c8c8; }

  .lower { margin: 6px 12px 0; width: 727px; height: 346px; box-sizing: border-box; background: #fff; padding-top: 9px; }
  .lpanel { border-top: 1px solid #bbb; height: 336px; box-sizing: border-box; position: relative; }
  .ltitle { height: 23px; line-height: 18px; padding-left: 2px; color: #222; }
  .detail { display: flex; height: 277px; margin-left: 2px; width: 724px; box-sizing: border-box; border: 1px solid #888; overflow: hidden; }
  .dtable { flex: none; width: 260px; }
  .dt-h { display: flex; height: 17px; line-height: 17px; color: #fff; font-weight: 700; text-align: center; }
  .dt-h .c1, .dt-h .c2 { background: #7db8f5; }
  .dt-h .c0 { background: #efefef; }
  .c0 { width: 21px; flex: none; box-sizing: border-box; }
  .c1 { width: 79px; flex: none; box-sizing: border-box; border-right: 1px solid #dce8f6; overflow: hidden; white-space: nowrap; }
  .c2 { width: 160px; flex: none; box-sizing: border-box; overflow: hidden; white-space: pre; }
  .dt-r { display: flex; height: 30px; line-height: 29px; border-bottom: 1px solid #dce8f6; box-sizing: border-box; background: #2e7fe0; color: #0a1a30; }
  .dt-r .c0 { background: #7db8f5; color: #fff; font-weight: 700; padding-left: 1px; font-size: 13px; }
  .dt-r .c1 { padding-left: 3px; }
  .dt-r .c2 { padding-left: 4px; letter-spacing: .6px; }
  .dfill { flex: none; width: 448px; }
  .fillhead { height: 17px; background: #efefef; }
  .fillbody { height: 260px; background: #cde6d0; }
  .dscroll { flex: 1; position: relative; }
  .dscroll i { position: absolute; left: 3px; top: 14px; width: 8px; height: 15px; border-radius: 4px; background: #cbcbcb; }
  .btns { display: flex; gap: 6px; padding: 7px 0 0 7px; }
  button { font: inherit; color: #222; height: 25px; width: 140px; padding: 0; background: #fff; border: 1px solid #ccc; border-radius: 3px; }
  button.exit { margin-left: 342px; width: 80px; background: #2e7fe0; border: 0; color: #fff; height: 26px; }
  .grip { position: absolute; right: 4px; bottom: 4px; }
  .marks { position: absolute; left: 0; top: 0; pointer-events: none; }
</style>
